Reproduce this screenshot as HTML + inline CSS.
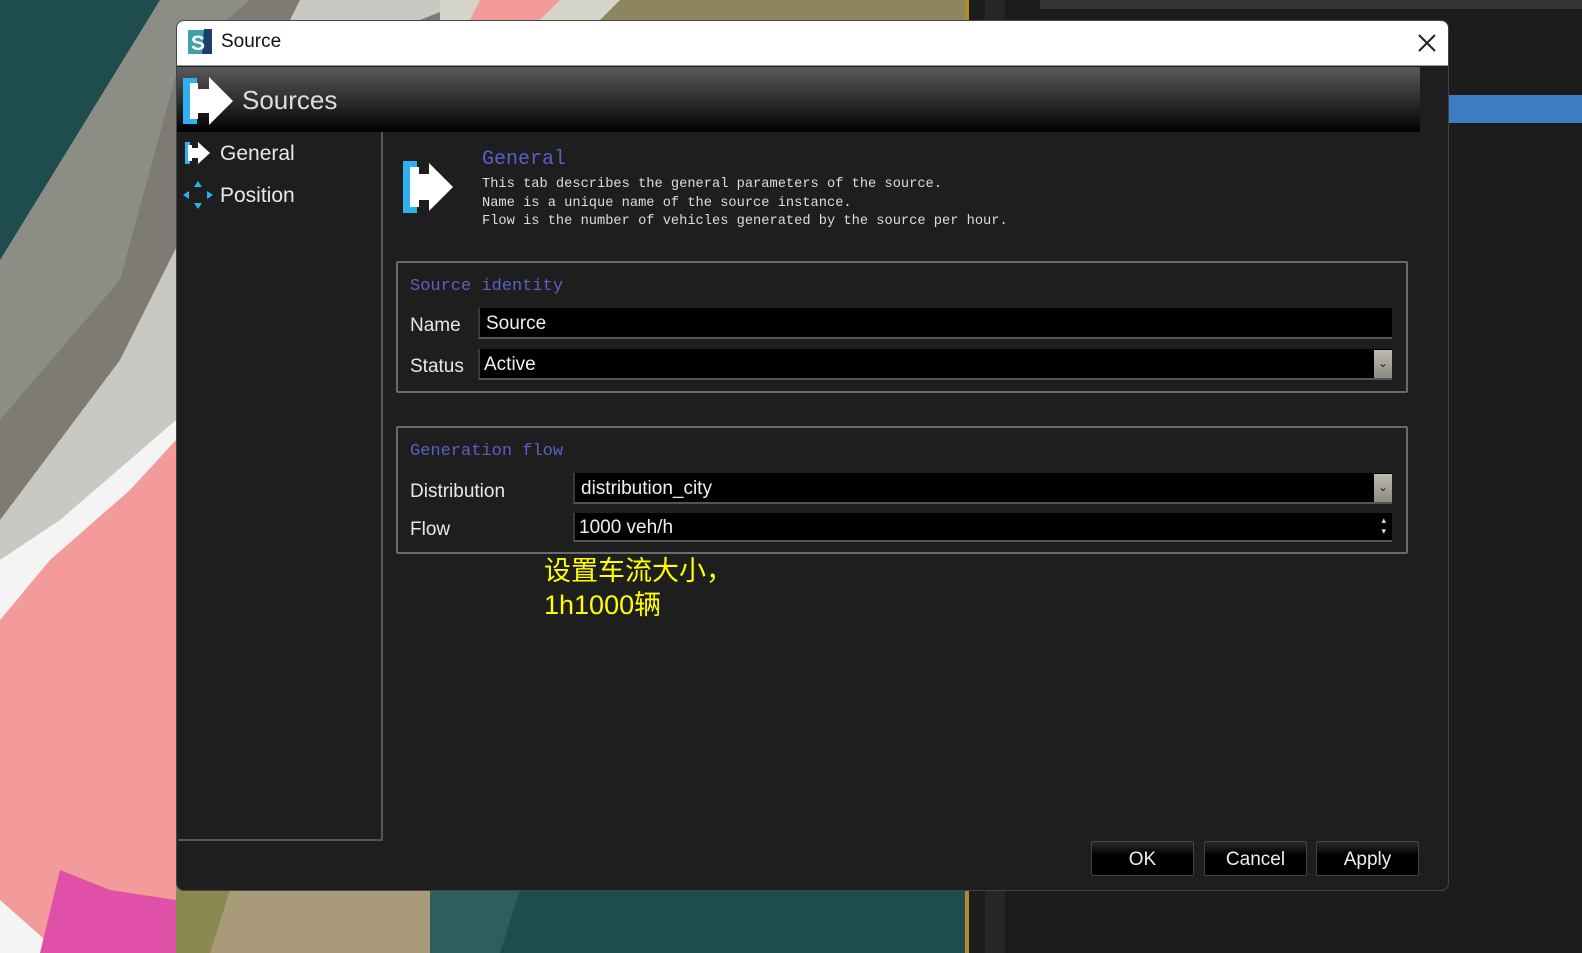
<!DOCTYPE html>
<html><head><meta charset="utf-8">
<style>
*{margin:0;padding:0;box-sizing:border-box}
body{width:1582px;height:953px;overflow:hidden;position:relative;background:#1b1b1b;font-family:"Liberation Sans","Noto Sans CJK SC",sans-serif}
.abs{position:absolute}
.mono{font-family:"Liberation Mono","DejaVu Sans Mono",monospace}
.lbl{color:#e8e8e8;font-size:19px}
.inp{position:absolute;background:#000;border-bottom:2px solid #555;border-left:2px solid #3a3a3a;color:#f0f0f0;font-size:19px;padding-left:6px;line-height:32px}
.dd{position:absolute;right:0;top:1px;width:18px;height:28px;background:linear-gradient(#bdbbb0,#8d8b80);color:#222;font-size:12px;text-align:center;line-height:26px}
.grp{position:absolute;border:2px solid #6a6a6a;border-radius:2px}
.gt{position:absolute;color:#5b5fc7;font-size:17px}
.btn{position:absolute;top:841px;width:103px;height:35px;background:linear-gradient(#2a2a2a,#000 40%);border:1px solid #444;border-radius:2px;color:#eee;font-size:19px;text-align:center;line-height:35px}
</style></head><body>
<svg class="abs" style="left:0;top:0" width="1582" height="953">
<rect x="0" y="0" width="970" height="953" fill="#1f4c4c"/>
<polygon points="160,0 470,0 180,953 0,953 0,260" fill="#8c8e86"/>
<polygon points="180,60 250,0 470,0 300,300 160,500 60,530 0,600 0,420 120,280" fill="#7d7b73"/>
<polygon points="300,0 470,0 420,20 176,330 176,420 60,560 0,620 0,520 120,360" fill="#c9c8c2"/>
<polygon points="176,420 176,953 0,953 0,560 60,520" fill="#f4f4f4"/>
<polygon points="176,440 176,953 60,953 0,900 0,620 50,560 130,490" fill="#f39a9a"/>
<polygon points="60,870 110,890 176,900 176,953 40,953" fill="#e050a8"/>
<polygon points="176,890 240,890 240,953 176,953" fill="#8a8a50"/>
<polygon points="230,890 450,890 430,953 210,953" fill="#a99a7a"/>
<polygon points="430,890 520,890 500,953 430,953" fill="#2f5f5c"/>
<rect x="440" y="0" width="525" height="20" fill="#d6d5cc"/>
<polygon points="480,0 560,0 540,20 470,20" fill="#f39a9a"/>
<polygon points="620,0 965,0 965,20 600,20" fill="#8d8460"/>
<rect x="965" y="0" width="617" height="953" fill="#1c1c1c"/>
<rect x="965" y="0" width="4" height="953" fill="#b58a2a"/>
<rect x="985" y="0" width="20" height="953" fill="#262626"/>
<rect x="1040" y="0" width="542" height="9" fill="#333"/>
<rect x="1449" y="95" width="133" height="28" fill="#3d7cc0"/>
</svg>
<div class="abs" style="left:176px;top:20px;width:1273px;height:871px;background:#1e1e1e;border-radius:8px;overflow:hidden;border:1px solid #444">
 <div class="abs" style="left:0;top:0;width:1273px;height:45px;background:#fff;border-bottom:1px solid #999"></div>
 <svg class="abs" style="left:11px;top:8px" width="24" height="26"><rect x="0" y="1" width="24" height="24" fill="#3fa2a8"/><polygon points="16,0 24,0 24,25 14,25" fill="#1b3f6b"/><text x="3" y="21" font-family="Liberation Sans" font-weight="bold" font-size="21" fill="#fff">S</text></svg>
 <div class="abs" style="left:44px;top:10px;font-size:19px;color:#111">Source</div>
 <svg class="abs" style="left:1240px;top:12px" width="20" height="20"><path d="M2 2L18 18M18 2L2 18" stroke="#222" stroke-width="2"/></svg>
 <div class="abs" style="left:0;top:46px;width:1243px;height:65px;background:linear-gradient(#5a5a5a,#2a2a2a 55%,#000)"></div>
 <svg class="abs" style="left:6px;top:54px" width="54" height="52"><rect x="0" y="3" width="14" height="46" fill="#2fb0f0"/><rect x="7" y="8" width="8" height="36" fill="#fff"/><polygon points="10,14 26,14 26,2 50,26 26,50 26,38 10,38" fill="#fff"/></svg>
 <div class="abs" style="left:65px;top:64px;font-size:26px;color:#ddd">Sources</div>
 <div class="abs" style="left:1px;top:111px;width:205px;height:709px;border:2px solid #555;border-top:none;border-left:none"></div>
 <svg class="abs" style="left:8px;top:120px" width="28" height="24"><rect x="0" y="1" width="5" height="22" fill="#2fb0f0"/><rect x="3" y="4" width="4" height="16" fill="#fff"/><polygon points="6,7 13,7 13,1 25,12 13,23 13,17 6,17" fill="#fff"/></svg>
 <div class="abs lbl" style="left:43px;top:121px;font-size:21px">General</div>
 <svg class="abs" style="left:6px;top:160px" width="30" height="28"><polygon points="15,0 19,6 11,6" fill="#2fb0f0"/><polygon points="15,28 19,22 11,22" fill="#2fb0f0"/><polygon points="0,14 6,10 6,18" fill="#2fb0f0"/><polygon points="30,14 24,10 24,18" fill="#2fb0f0"/></svg>
 <div class="abs lbl" style="left:43px;top:163px;font-size:21px">Position</div>
 <svg class="abs" style="left:224px;top:138px" width="56" height="56"><rect x="2" y="2" width="14" height="52" fill="#2fb0f0"/><rect x="9" y="8" width="9" height="40" fill="#fff"/><polygon points="12,15 28,15 28,4 52,28 28,52 28,41 12,41" fill="#fff"/></svg>
 <div class="abs mono" style="left:305px;top:127px;font-size:20px;color:#5b5fc7">General</div>
 <div class="abs mono" style="left:305px;top:155px;font-size:13.7px;color:#ddd;line-height:18.5px;white-space:pre">This tab describes the general parameters of the source.
Name is a unique name of the source instance.
Flow is the number of vehicles generated by the source per hour.</div>
 <div class="grp" style="left:219px;top:240px;width:1012px;height:132px"></div>
 <div class="gt mono" style="left:233px;top:256px">Source identity</div>
 <div class="abs lbl" style="left:233px;top:294px">Name</div>
 <div class="inp" style="left:301px;top:287px;width:914px;height:31px">Source</div>
 <div class="abs lbl" style="left:233px;top:335px">Status</div>
 <div class="inp" style="left:301px;top:328px;width:914px;height:31px;padding-left:4px">Active<div class="dd">&#8964;</div></div>
 <div class="grp" style="left:219px;top:405px;width:1012px;height:128px"></div>
 <div class="gt mono" style="left:233px;top:421px">Generation flow</div>
 <div class="abs lbl" style="left:233px;top:460px">Distribution</div>
 <div class="inp" style="left:396px;top:452px;width:819px;height:31px">distribution_city<div class="dd">&#8964;</div></div>
 <div class="abs lbl" style="left:233px;top:498px">Flow</div>
 <div class="inp" style="left:396px;top:492px;width:819px;height:29px;padding-left:4px;line-height:30px">1000 veh/h<div class="abs" style="right:6px;top:2px;color:#ddd;font-size:9px;line-height:11px">▴<br>▾</div></div>
 <div class="abs" style="left:367px;top:533px;color:#ffff00;font-size:27px;line-height:34px;font-family:'Liberation Sans','Noto Sans CJK SC',sans-serif">设置车流大小，<br>1h1000辆</div>
</div>
<div class="btn" style="left:1091px">OK</div>
<div class="btn" style="left:1204px">Cancel</div>
<div class="btn" style="left:1316px">Apply</div>
</body></html>
